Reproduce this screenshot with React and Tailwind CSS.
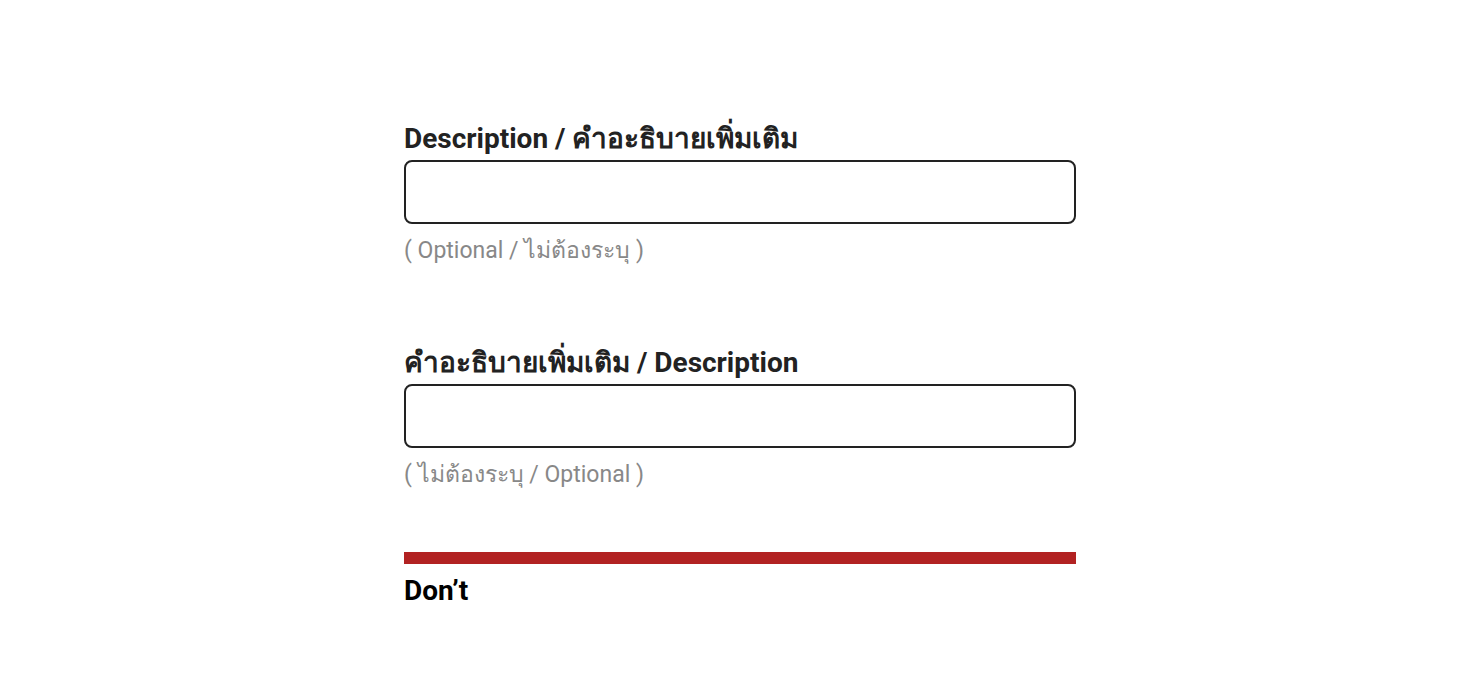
export default function App() {
  const fields = [
    { label: 'Description / คำอะธิบายเพิ่มเติม', hint: '( Optional / ไม่ต้องระบุ )' },
    { label: 'คำอะธิบายเพิ่มเติม / Description', hint: '( ไม่ต้องระบุ / Optional )' },
  ];

  return (
    <div className="min-h-screen bg-white font-['Roboto','Noto_Sans',sans-serif]">
      <div className="mx-auto w-[672px] pt-[121px]">
        {fields.map((f, i) => (
          <div key={i} className={i > 0 ? 'mt-[79px]' : ''}>
            <label className="block text-[28px] leading-[36px] font-bold text-[#222]">
              {f.label}
            </label>
            <input
              type="text"
              className="mt-[3px] block h-[64px] w-full rounded-[8px] border-2 border-[#222] bg-white px-4 outline-none"
            />
            <p className="mt-[12px] text-[23px] leading-[30px] text-[#888]">{f.hint}</p>
          </div>
        ))}

        <div className="mt-[62px] h-[12px] bg-[#b22222]" />
        <h3 className="mt-[10px] text-[28px] leading-[34px] font-bold text-black">Don’t</h3>
      </div>
    </div>
  );
}
